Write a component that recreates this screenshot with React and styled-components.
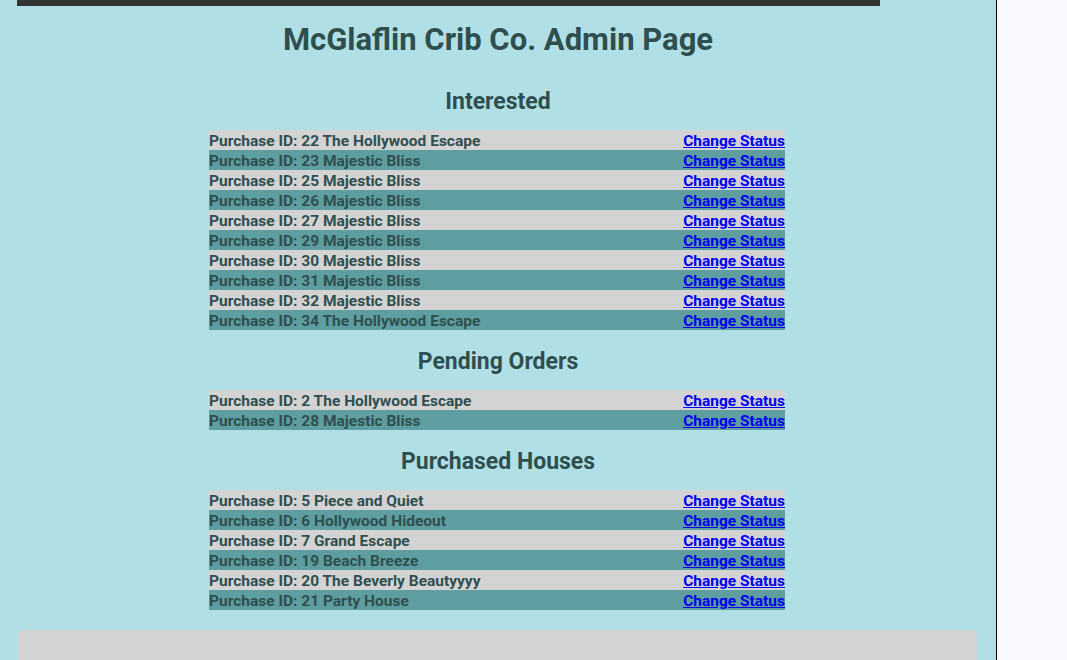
import React from "react";
import styled, { createGlobalStyle } from "styled-components";

const Global = createGlobalStyle`
  html, body { margin: 0; padding: 0; background: #f8f8ff; }
  body { font-family: Roboto, "Liberation Sans", sans-serif; color: #2f4f4f; }
`;

const Page = styled.div`
  display: flex;
  min-height: 660px;
  overflow: hidden;
`;

const Main = styled.main`
  width: 997px;
  flex: none;
  box-sizing: border-box;
  background: #b0e0e6;
  border-right: 1px solid #000;
  display: flex;
  flex-direction: column;
  height: 660px;
  overflow: hidden;
`;

const Side = styled.aside`
  flex: 1;
  background: #f8f8ff;
`;

const TopBar = styled.div`
  height: 6px;
  width: 863px;
  margin-left: 17px;
  background: #333333;
  flex: none;
`;

const Title = styled.h1`
  margin: 17px 0 0;
  text-align: center;
  font-size: 31px;
  line-height: 34px;
  font-weight: 700;
  color: #2f4f4f;
`;

const Heading = styled.h2`
  margin: ${(p) => p.$top}px 0 0;
  padding-top: 2px;
  height: 26px;
  box-sizing: border-box;
  text-align: center;
  font-size: 23px;
  line-height: 26px;
  font-weight: 700;
  color: #2f4f4f;
`;

const List = styled.div`
  width: 576px;
  margin: 17px 0 0 209px;
  display: flex;
  flex-direction: column;
`;

const Row = styled.div`
  height: 20px;
  box-sizing: border-box;
  padding-top: 2px;
  display: flex;
  align-items: center;
  justify-content: space-between;
  background: ${(p) => (p.$alt ? "#5f9ea0" : "#d3d3d3")};
  font-size: 15.5px;
  font-weight: 700;
  color: #2f4f4f;
`;

const Link = styled.a`
  color: #0000ee;
  text-decoration: underline;
  font-weight: 700;
  cursor: pointer;
`;

const Footer = styled.div`
  margin: 20px 19px 0 18px;
  height: 60px;
  flex: none;
  background: #d3d3d3;
  border-radius: 5px 5px 0 0;
`;

const sections = [
  {
    title: "Interested",
    top: 30,
    items: [
      "22 The Hollywood Escape",
      "23 Majestic Bliss",
      "25 Majestic Bliss",
      "26 Majestic Bliss",
      "27 Majestic Bliss",
      "29 Majestic Bliss",
      "30 Majestic Bliss",
      "31 Majestic Bliss",
      "32 Majestic Bliss",
      "34 The Hollywood Escape",
    ],
  },
  {
    title: "Pending Orders",
    top: 17,
    items: ["2 The Hollywood Escape", "28 Majestic Bliss"],
  },
  {
    title: "Purchased Houses",
    top: 17,
    items: [
      "5 Piece and Quiet",
      "6 Hollywood Hideout",
      "7 Grand Escape",
      "19 Beach Breeze",
      "20 The Beverly Beautyyyy",
      "21 Party House",
    ],
  },
];

export default function App() {
  return (
    <>
      <Global />
      <Page>
        <Main>
          <TopBar />
          <Title>McGlaflin Crib Co. Admin Page</Title>
          {sections.map((s) => (
            <React.Fragment key={s.title}>
              <Heading $top={s.top}>{s.title}</Heading>
              <List>
                {s.items.map((it, i) => (
                  <Row key={it} $alt={i % 2 === 1}>
                    <span>Purchase ID: {it}</span>
                    <Link href="#">Change Status</Link>
                  </Row>
                ))}
              </List>
            </React.Fragment>
          ))}
          <Footer />
        </Main>
        <Side />
      </Page>
    </>
  );
}
